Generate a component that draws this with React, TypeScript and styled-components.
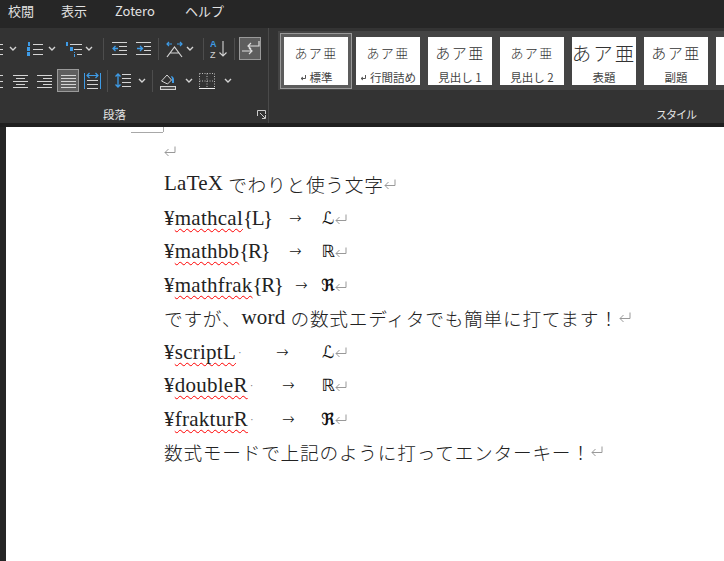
import React from "react";
import styled, { createGlobalStyle } from "styled-components";

const Global = createGlobalStyle`
  html, body { margin: 0; padding: 0; width: 724px; height: 561px; overflow: hidden; background: #fff; }
  #root { width: 724px; height: 561px; }
`;
const UI = `"Noto Sans CJK JP", "Noto Sans", sans-serif`;
const Window = styled.div`width:724px;height:561px;display:flex;flex-direction:column;overflow:hidden;background:#262626;font-family:${UI};`;
const TabBar = styled.nav`height:28px;flex:none;display:flex;align-items:center;background:#262626;padding:0 0 6px 8px;box-sizing:border-box;`;
const Tab = styled.span<{ $w: number }>`width:${p => p.$w}px;font-size:13px;line-height:18px;color:#e2e2e2;font-family:"Noto Sans CJK JP","Open Sans",sans-serif;`;
const Ribbon = styled.div`height:95px;flex:none;display:flex;background:#333333;`;
const ParagraphGroup = styled.section`width:268px;flex:none;height:95px;display:flex;flex-direction:column;overflow:hidden;border-right:1px solid #4a4a4a;position:relative;`;
const ToolRow = styled.div<{ $top: number }>`display:flex;align-items:center;height:23px;margin-top:${p => p.$top}px;`;
const Tool = styled.span<{ $w: number; $ml: number; $on?: boolean }>`
  flex:none;width:${p => p.$w}px;height:23px;margin-left:${p => p.$ml}px;display:flex;align-items:center;justify-content:center;box-sizing:border-box;
  ${p => p.$on ? "background:#5e5e5e;border:1px solid #9a9a9a;" : ""}
  svg{display:block;flex:none;}
`;
const Sep = styled.i<{ $ml: number }>`flex:none;width:1px;height:22px;background:#4d4d4d;margin-left:${p => p.$ml}px;`;
const GroupFoot = styled.div`margin-top:auto;height:18px;display:flex;align-items:center;padding-left:103px;position:relative;font-size:11.5px;color:#e6e6e6;`;
const Launcher = styled.svg`position:absolute;right:2px;top:5px;`;
const StylesGroup = styled.section`flex:1;min-width:0;height:95px;display:flex;flex-direction:column;padding:3px 0 0 9px;box-sizing:border-box;`;
const Gallery = styled.div`height:59px;background:#444444;display:flex;gap:8px;padding:6px 0 0 6px;box-sizing:border-box;overflow:hidden;position:relative;`;
const Card = styled.div<{ $on?: boolean }>`
  flex:none;width:64px;height:48px;background:#fff;display:flex;flex-direction:column;align-items:center;position:relative;color:#333;
  ${p => p.$on ? "outline:1px solid #999;outline-offset:3px;box-shadow:0 0 0 3px #5c5c5c;" : ""}
`;
const Sample = styled.div<{ $size: number }>`height:30px;display:flex;align-items:center;justify-content:center;font-size:${p => p.$size}px;letter-spacing:${p => p.$size * .1}px;white-space:nowrap;color:#333;font-weight:300;`;
const CardName = styled.div`margin-top:3px;font-size:11.5px;line-height:14px;color:#444;white-space:nowrap;display:flex;align-items:center;gap:3px;`;
const StylesFoot = styled.div`margin-top:auto;height:18px;display:flex;align-items:center;font-size:11px;letter-spacing:-1px;color:#e6e6e6;padding-left:378px;`;
const DarkStrip = styled.div`height:4px;flex:none;background:#1f1f1f;`;
const DocArea = styled.div`flex:1;display:flex;min-height:0;`;
const LeftGutter = styled.div`width:6px;flex:none;background:#262626;`;
const Page = styled.main`flex:1;background:#fff;position:relative;padding:8px 0 0 158px;box-sizing:border-box;font-family:"Liberation Serif","Noto Sans CJK JP",serif;font-size:21px;font-weight:300;color:#222;letter-spacing:.25px;`;
const CropH = styled.i`position:absolute;left:125px;top:5px;width:32px;height:0;border-top:1px solid #a8a8a8;`;
const CropV = styled.i`position:absolute;left:157px;top:0;width:0;height:5px;border-left:1px solid #a8a8a8;`;
const Line = styled.div<{ $h?: number }>`height:${p => p.$h ?? 33.45}px;line-height:${p => p.$h ?? 33.45}px;white-space:nowrap;display:flex;align-items:center;`;
const FormulaLine = styled(Line)`padding-top:3px;box-sizing:border-box;`;
const NameCol = styled.span<{ $w: number }>`flex:none;width:${p => p.$w}px;display:flex;align-items:center;`;
const ArrowCol = styled.span<{ $w: number }>`flex:none;width:${p => p.$w}px;font-family:"DejaVu Sans",sans-serif;font-size:15px;color:#111;letter-spacing:0;`;
const Mis = styled.span`text-decoration:underline wavy #f00 1px;text-underline-offset:3px;text-decoration-skip-ink:none;`;
const Brace = styled.span`letter-spacing:-1.4px;`;
const Sym = styled.span<{ $bold?: boolean }>`flex:none;width:14px;font-family:"DejaVu Sans","Liberation Serif",serif;font-size:17px;font-weight:${p => p.$bold ? 700 : 400};color:#111;letter-spacing:0;display:flex;justify-content:center;`;
const Dot = styled.span`color:#777;font-size:11px;margin-left:2px;`;
const Pilcrow = styled.svg`flex:none;`;
const Ja = styled.span`font-family:"Noto Sans CJK JP",sans-serif;font-size:18.7px;letter-spacing:.75px;`;

const C = "#d4d4d4", B = "#3e9be6";
const Ret = () => (
  <Pilcrow width="12" height="12" viewBox="0 0 12 12" fill="none" stroke="#999" strokeWidth="1">
    <path d="M11 1.5v6H1M4.5 4 1 7.5 4.5 11" />
  </Pilcrow>
);
const Chev = () => <svg width="8" height="5" viewBox="0 0 8 5"><path d="M1 1l3 3 3-3" fill="none" stroke={C} strokeWidth="1.4" /></svg>;
const Lines = ({ rows }: { rows: [number, number, number][] }) => <>{rows.map(([x, y, w], i) => <rect key={i} x={x} y={y} width={w} height="1" fill={C} />)}</>;
const I = ({ w = 16, h = 16, children }: { w?: number; h?: number; children: React.ReactNode }) => <svg width={w} height={h} viewBox={`0 0 ${w} ${h}`} fill="none">{children}</svg>;
const Bullets = () => <I w={15}><Lines rows={[[0, 3, 15], [0, 8, 15], [0, 13, 15]]} /></I>;
const Numbered = () => <I w={16}><Lines rows={[[6, 3, 10], [6, 8, 10], [6, 13, 10]]} /><g fill={B}><rect x="1" y="1" width="2" height="4" /><rect x="0" y="6" width="3" height="4" /><rect x="0" y="11" width="3" height="4" /></g></I>;
const Multi = () => <I w={17}><Lines rows={[[5, 3, 12], [9, 8, 8], [12, 13, 5]]} /><g fill={B}><rect x="1" y="1" width="2" height="4" /><rect x="5" y="6" width="3" height="4" /><rect x="9" y="11" width="1" height="1" /><rect x="9" y="13" width="1" height="3" /></g></I>;
const Outdent = () => <I w={15}><Lines rows={[[0, 1, 15], [7, 5, 8], [7, 9, 8], [0, 13, 15]]} /><path d="M6 7.5H1M3.5 5 1 7.5 3.5 10" stroke={B} strokeWidth="1.3" /></I>;
const Indent = () => <I w={15}><Lines rows={[[0, 1, 15], [8, 5, 7], [8, 9, 7], [0, 13, 15]]} /><path d="M1 7.5h5M4 5l2.5 2.5L4 10" stroke={B} strokeWidth="1.3" /></I>;
const Asian = () => <I w={17} h={18}><path d="M1 4h5M3 2 1 4l2 2M16 4h-5M14 2l2 2-2 2" stroke={B} strokeWidth="1.2" /><path d="M1 17 8.5 7 16 17M4 13h9" stroke={C} strokeWidth="1.2" /></I>;
const Sort = () => <I w={17} h={20}><text x="0" y="8" fontSize="9" fontWeight="700" fontFamily="Liberation Sans" fill={B}>A</text><text x="0" y="19" fontSize="9" fontFamily="Liberation Sans" fill={C}>Z</text><path d="M13 2v15M9.5 13.5 13 17l3.5-3.5" stroke={C} strokeWidth="1.1" /></I>;
const Para = () => <I w={19} h={17}><path d="M18 1v5H7M10 3 7 6l3 3" stroke="#ddd" strokeWidth="1.2" /><path d="M1 11h10M8 8l3 3-3 3" stroke="#ddd" strokeWidth="1.2" /></I>;
const Left = () => <I w={15}><Lines rows={[[0, 2, 15], [0, 5, 9], [0, 8, 15], [0, 11, 9], [0, 14, 15]]} /></I>;
const Center = () => <I w={15}><Lines rows={[[0, 2, 15], [3, 5, 9], [0, 8, 15], [3, 11, 9], [0, 14, 15]]} /></I>;
const Right = () => <I w={15}><Lines rows={[[0, 2, 15], [6, 5, 9], [0, 8, 15], [6, 11, 9], [0, 14, 15]]} /></I>;
const Justify = () => <I w={15}><Lines rows={[[0, 2, 15], [0, 5, 15], [0, 8, 15], [0, 11, 15], [0, 14, 15]]} /></I>;
const Distribute = () => <I w={17} h={18}><path d="M.5 1v16M16.5 1v16" stroke={B} /><path d="M3 3.5h11M5.5 1 3 3.5 5.5 6M11.5 1 14 3.5 11.5 6" stroke={B} strokeWidth="1.2" /><Lines rows={[[3, 8, 11], [3, 12, 11], [3, 16, 11]]} /></I>;
const Spacing = () => <I w={16} h={17}><Lines rows={[[7, 2, 9], [7, 6, 9], [7, 10, 9], [7, 14, 9]]} /><path d="M3 2v13M.5 4.5 3 2l2.5 2.5M.5 12.5 3 15l2.5-2.5" stroke={B} strokeWidth="1.3" /></I>;
const Shade = () => <I w={17} h={18}><path d="M1.5 9 7 3l4.5 5-4 4z" stroke={C} /><path d="M11 4c2.5.5 3 2 3 4v3h-2V7z" fill={B} /><rect x=".5" y="14.5" width="15" height="3" stroke={C} fill="#555" /></I>;
const Borders = () => <I w={16} h={16}><path d="M.5.5h15M.5.5v15M15.5.5v15M8 .5v15M.5 8h15" stroke="#bbb" strokeDasharray="1 1.5" /><rect x="0" y="15" width="16" height="1" fill="#eee" /></I>;

export default function App() {
  const cards = [
    { s: 13, n: "標準", r: true, on: true }, { s: 13, n: "行間詰め", r: true },
    { s: 15, n: "見出し 1" }, { s: 13, n: "見出し 2" },
    { s: 19.5, n: "表題" }, { s: 15, n: "副題" },
  ];
  return (
    <Window>
      <Global />
      <TabBar>
        <Tab $w={53}>校閲</Tab><Tab $w={54}>表示</Tab><Tab $w={70}>Zotero</Tab><Tab $w={40}>ヘルプ</Tab>
      </TabBar>
      <Ribbon>
        <ParagraphGroup>
          <ToolRow $top={9}>
            <Tool $w={15} $ml={-12}><Bullets /></Tool><Tool $w={8} $ml={6}><Chev /></Tool>
            <Tool $w={16} $ml={10}><Numbered /></Tool><Tool $w={8} $ml={5}><Chev /></Tool>
            <Tool $w={17} $ml={9}><Multi /></Tool><Tool $w={8} $ml={3}><Chev /></Tool><Sep $ml={10} />
            <Tool $w={15} $ml={8}><Outdent /></Tool><Tool $w={15} $ml={9}><Indent /></Tool><Sep $ml={7} />
            <Tool $w={17} $ml={7}><Asian /></Tool><Tool $w={8} $ml={3}><Chev /></Tool><Sep $ml={9} />
            <Tool $w={17} $ml={6}><Sort /></Tool><Sep $ml={7} />
            <Tool $w={22} $ml={4} $on><Para /></Tool>
          </ToolRow>
          <ToolRow $top={9}>
            <Tool $w={15} $ml={-12}><Left /></Tool>
            <Tool $w={15} $ml={10}><Center /></Tool><Tool $w={15} $ml={9}><Right /></Tool>
            <Tool $w={22} $ml={5} $on><Justify /></Tool><Tool $w={17} $ml={5}><Distribute /></Tool><Sep $ml={6} />
            <Tool $w={16} $ml={7}><Spacing /></Tool><Tool $w={8} $ml={7}><Chev /></Tool><Sep $ml={6} />
            <Tool $w={17} $ml={7}><Shade /></Tool><Tool $w={8} $ml={8}><Chev /></Tool>
            <Tool $w={16} $ml={6}><Borders /></Tool><Tool $w={8} $ml={9}><Chev /></Tool>
          </ToolRow>
          <GroupFoot>段落
            <Launcher width="9" height="9" viewBox="0 0 9 9" fill="none" stroke="#ccc"><path d="M.5 6V.5H8.5V4M3 3l5 5M8.5 5v3.5H5" /></Launcher>
          </GroupFoot>
        </ParagraphGroup>
        <StylesGroup>
          <Gallery>
            {cards.map((c, i) => (
              <Card key={i} $on={c.on}>
                <Sample $size={c.s}>あア亜</Sample>
                <CardName>
                  {c.r && <svg width="7" height="7" viewBox="0 0 7 7" fill="none" stroke="#555"><path d="M5.5 1v3.5H1M3 3 1 4.5 3 6" /></svg>}
                  {c.n}
                </CardName>
              </Card>
            ))}
            <Card />
          </Gallery>
          <StylesFoot>スタイル</StylesFoot>
        </StylesGroup>
      </Ribbon>
      <DarkStrip />
      <DocArea>
        <LeftGutter />
        <Page>
          <CropH /><CropV />
          <Line $h={32}><Ret /></Line>
          <Line>LaTeX <Ja>&nbsp;でわりと使う文字</Ja><Ret /></Line>
          <FormulaLine><NameCol $w={125}>¥<Mis>mathcal</Mis><Brace>{"{L}"}</Brace></NameCol><ArrowCol $w={32}>→</ArrowCol><Sym>ℒ</Sym><Ret /></FormulaLine>
          <FormulaLine><NameCol $w={125}>¥<Mis>mathbb</Mis><Brace>{"{R}"}</Brace></NameCol><ArrowCol $w={32}>→</ArrowCol><Sym>ℝ</Sym><Ret /></FormulaLine>
          <FormulaLine><NameCol $w={131}>¥<Mis>mathfrak</Mis><Brace>{"{R}"}</Brace></NameCol><ArrowCol $w={26}>→</ArrowCol><Sym $bold>ℜ</Sym><Ret /></FormulaLine>
          <Line><Ja>ですが、</Ja>word <Ja>&nbsp;の数式エディタでも簡単に打てます！</Ja><Ret /></Line>
          <FormulaLine><NameCol $w={112}>¥<Mis>scriptL</Mis><Dot>·</Dot></NameCol><ArrowCol $w={45}>→</ArrowCol><Sym>ℒ</Sym><Ret /></FormulaLine>
          <FormulaLine><NameCol $w={118}>¥<Mis>doubleR</Mis><Dot>·</Dot></NameCol><ArrowCol $w={39}>→</ArrowCol><Sym>ℝ</Sym><Ret /></FormulaLine>
          <FormulaLine><NameCol $w={118}>¥<Mis>frakturR</Mis><Dot>·</Dot></NameCol><ArrowCol $w={39}>→</ArrowCol><Sym $bold>ℜ</Sym><Ret /></FormulaLine>
          <Line><Ja>数式モードで上記のように打ってエンターキー！</Ja><Ret /></Line>
        </Page>
      </DocArea>
    </Window>
  );
}
